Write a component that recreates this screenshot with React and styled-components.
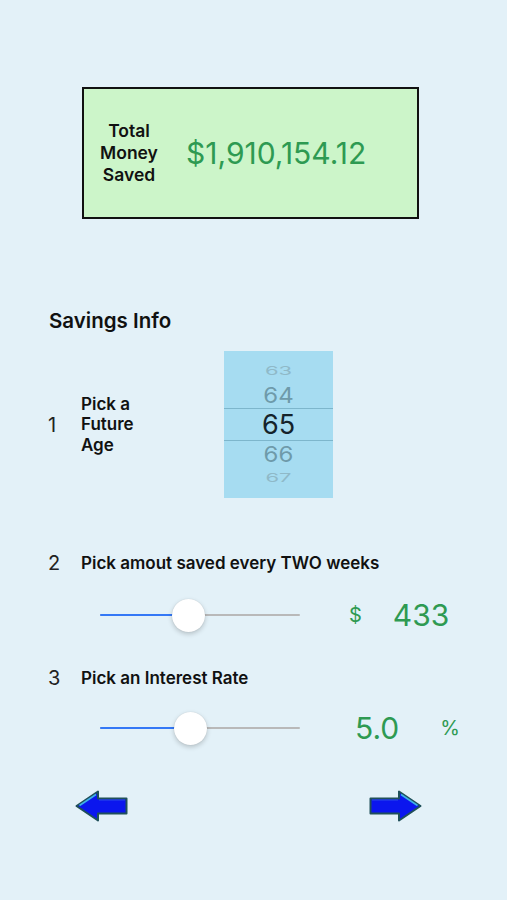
import React from 'react'
import styled, { createGlobalStyle } from 'styled-components'

const GlobalStyle = createGlobalStyle`
  html, body {
    margin: 0;
    padding: 0;
    background: #e3f1f8;
  }
  body {
    font-family: Inter, "Liberation Sans", sans-serif;
    color: #111;
  }
`

const Page = styled.div`
  width: 507px;
  height: 900px;
  padding-top: 87px;
  box-sizing: border-box;
  background: #e3f1f8;
`

const TotalBox = styled.div`
  margin-left: 82px;
  width: 337px;
  height: 132px;
  box-sizing: border-box;
  border: 2px solid #111;
  background: #ccf5c9;
  display: flex;
  align-items: center;
`

const TotalLabel = styled.div`
  width: 90px;
  text-align: center;
  font-size: 17.5px;
  font-weight: 600;
  line-height: 22px;
  color: #111;
`

const TotalAmount = styled.div`
  margin-left: 12px;
  font-size: 30px;
  color: #2e9a52;
`

const SectionTitle = styled.h2`
  margin: 90px 0 0 49px;
  font-size: 20.5px;
  line-height: 24px;
  font-weight: 600;
`

const AgeRow = styled.div`
  display: flex;
  align-items: center;
  margin: 18px 0 0 48px;
  height: 147px;
`

const StepNumber = styled.span`
  width: 33px;
  font-size: 20px;
  color: #222;
`

const StepLabel = styled.div`
  width: 143px;
  font-size: 17px;
  font-weight: 600;
  line-height: 20.5px;
`

const Picker = styled.div`
  width: 109px;
  height: 147px;
  background: #a6dcf1;
  display: flex;
  flex-direction: column;
  justify-content: center;
  align-items: stretch;
  overflow: hidden;
`

const PickerItem = styled.div`
  height: ${p => p.h}px;
  display: flex;
  align-items: center;
  justify-content: center;
  font-size: ${p => p.size}px;
  color: ${p => p.color};
  transform: scaleY(${p => p.squash});
  ${p => p.selected && `
    border-top: 1.5px solid #7db6cc;
    border-bottom: 1.5px solid #7db6cc;
    box-sizing: border-box;
  `}
`

const StepHeader = styled.div`
  display: flex;
  align-items: center;
  margin: ${p => p.top}px 0 0 48px;
  height: 20px;
`

const StepTitle = styled.span`
  font-size: 17px;
  font-weight: 600;
`

const SliderRow = styled.div`
  display: flex;
  align-items: center;
  height: 40px;
  margin: ${p => p.top}px 0 0 100px;
`

const Track = styled.div`
  position: relative;
  width: 200px;
  height: 2px;
  background: #b9b9b9;
  border-radius: 1px;
`

const TrackFill = styled.div`
  height: 100%;
  background: #3478f6;
  border-radius: 1px;
`

const Thumb = styled.div`
  position: absolute;
  top: 50%;
  width: 33px;
  height: 33px;
  margin: -16.5px 0 0 -16.5px;
  border-radius: 50%;
  background: #fff;
  box-shadow: 0 2px 5px rgba(0, 0, 0, 0.2), 0 0 1px rgba(0, 0, 0, 0.15);
`

const Unit = styled.span`
  margin-left: ${p => p.gap}px;
  font-size: 20px;
  color: #2e9a52;
`

const Value = styled.span`
  margin-left: ${p => p.gap}px;
  font-size: 30px;
  color: #2e9a52;
`

const NavRow = styled.div`
  display: flex;
  justify-content: space-between;
  margin: 42px 0 0 75px;
  width: 347px;
`

const ArrowButton = styled.button`
  border: none;
  background: none;
  padding: 0;
  width: 53px;
  height: 32px;
  cursor: pointer;
  svg { display: block; }
`

const Arrow = ({ flip }) => (
  <svg width="53" height="32" viewBox="0 0 53 32">
    <g transform={flip ? 'translate(53 0) scale(-1 1)' : undefined}>
      <polygon
        points="1.5,16 23,1.5 23,8.5 51.5,8.5 51.5,23.5 23,23.5 23,30.5"
        fill="#0b16ee"
        stroke="#20505a"
        strokeWidth="2"
        strokeLinejoin="round"
      />
      <polyline points="4.5,15.5 21,4.5" fill="none" stroke="#3fb0e6" strokeWidth="1.6" />
      <polyline points="24,10 50,10" fill="none" stroke="#2a4de8" strokeWidth="1" />
    </g>
  </svg>
)

const Slider = ({ value }) => (
  <Track>
    <TrackFill style={{ width: `${value}%` }} />
    <Thumb style={{ left: `${value}%` }} />
  </Track>
)

const ages = [
  { n: 63, h: 22, size: 22, color: '#8fb9c8', squash: 0.55 },
  { n: 64, h: 26, size: 24, color: '#6e9aaa', squash: 0.9 },
  { n: 65, h: 33, size: 27, color: '#15232b', squash: 1, selected: true },
  { n: 66, h: 26, size: 24, color: '#6e9aaa', squash: 0.9 },
  { n: 67, h: 22, size: 22, color: '#8fb9c8', squash: 0.55 },
]

const App = () => (
  <Page>
    <GlobalStyle />
    <TotalBox>
      <TotalLabel>Total<br />Money<br />Saved</TotalLabel>
      <TotalAmount>$1,910,154.12</TotalAmount>
    </TotalBox>

    <SectionTitle>Savings Info</SectionTitle>

    <AgeRow>
      <StepNumber>1</StepNumber>
      <StepLabel>Pick a<br />Future<br />Age</StepLabel>
      <Picker>
        {ages.map(a => (
          <PickerItem key={a.n} {...a}>{a.n}</PickerItem>
        ))}
      </Picker>
    </AgeRow>

    <StepHeader top={55}>
      <StepNumber>2</StepNumber>
      <StepTitle>Pick amout saved every TWO weeks</StepTitle>
    </StepHeader>
    <SliderRow top={22}>
      <Slider value={44} />
      <Unit gap={49}>$</Unit>
      <Value gap={31}>433</Value>
    </SliderRow>

    <StepHeader top={33}>
      <StepNumber>3</StepNumber>
      <StepTitle>Pick an Interest Rate</StepTitle>
    </StepHeader>
    <SliderRow top={20}>
      <Slider value={45} />
      <Value gap={55}>5.0</Value>
      <Unit gap={41}>%</Unit>
    </SliderRow>

    <NavRow>
      <ArrowButton aria-label="Back"><Arrow /></ArrowButton>
      <ArrowButton aria-label="Next"><Arrow flip /></ArrowButton>
    </NavRow>
  </Page>
)

export default App
